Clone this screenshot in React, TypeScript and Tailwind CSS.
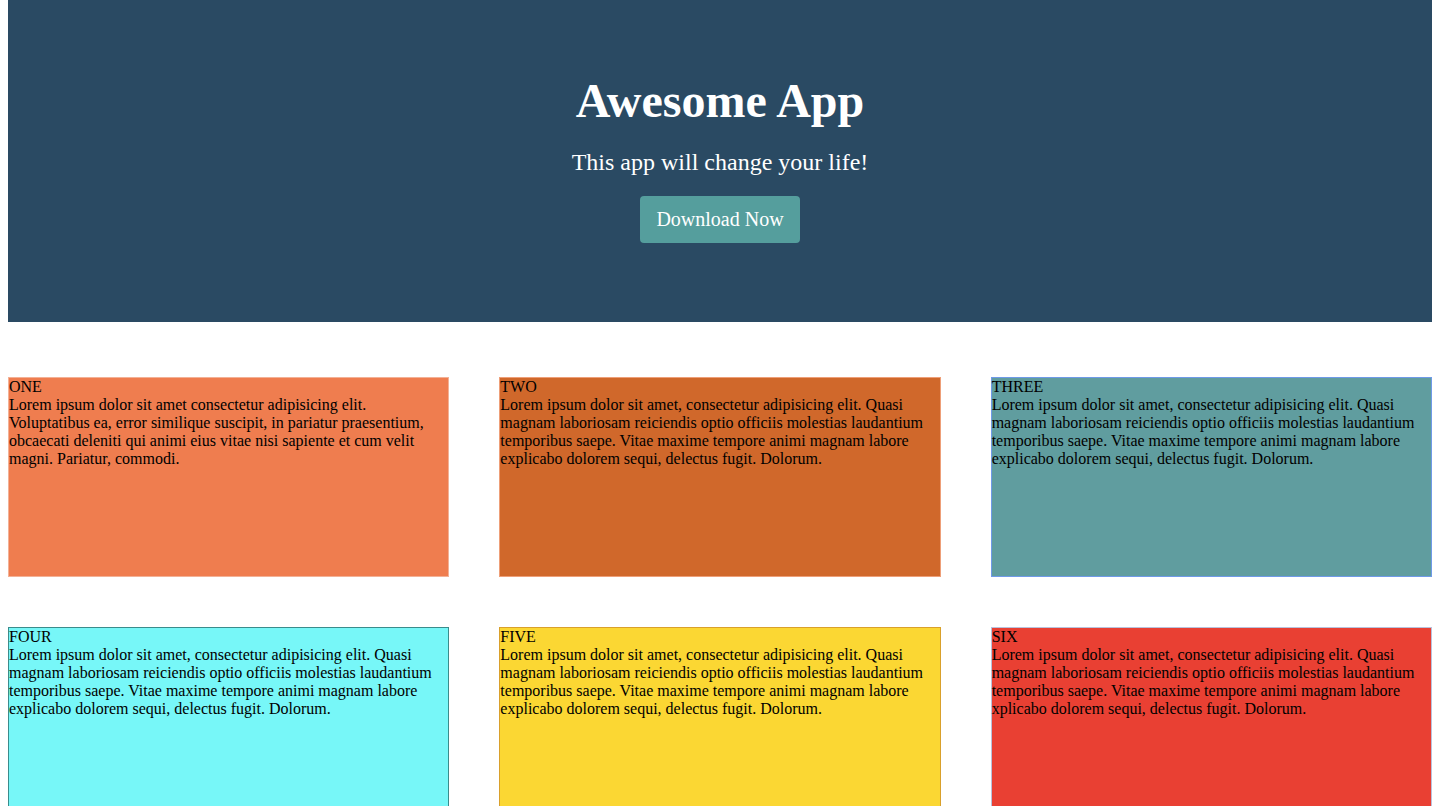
import React from 'react';

interface Card {
  title: string;
  text: string;
  className: string;
}

const longText =
  'Lorem ipsum dolor sit amet, consectetur adipisicing elit. Quasi magnam laboriosam reiciendis optio officiis molestias laudantium temporibus saepe. Vitae maxime tempore animi magnam labore explicabo dolorem sequi, delectus fugit. Dolorum.';

const cards: Card[] = [
  {
    title: 'ONE',
    text: 'Lorem ipsum dolor sit amet consectetur adipisicing elit. Voluptatibus ea, error similique suscipit, in pariatur praesentium, obcaecati deleniti qui animi eius vitae nisi sapiente et cum velit magni. Pariatur, commodi.',
    className: 'bg-[#ef7d4f] border-[#f3b196]',
  },
  { title: 'TWO', text: longText, className: 'bg-[#d0682b] border-[#ee9f78]' },
  { title: 'THREE', text: longText, className: 'bg-[#609d9f] border-[#6f9ae8]' },
  { title: 'FOUR', text: longText, className: 'bg-[#77f7f8] border-[#3a8c8c]' },
  { title: 'FIVE', text: longText, className: 'bg-[#fbd733] border-[#d9a02b]' },
  {
    title: 'SIX',
    text: 'Lorem ipsum dolor sit amet, consectetur adipisicing elit. Quasi magnam laboriosam reiciendis optio officiis molestias laudantium temporibus saepe. Vitae maxime tempore animi magnam labore xplicabo dolorem sequi, delectus fugit. Dolorum.',
    className: 'bg-[#e94033] border-[#b9c2dc]',
  },
];

const App: React.FC = () => {
  return (
    <div className="px-2 pb-8 bg-white text-black font-['Liberation_Serif','Times_New_Roman',serif]">
      <header className="h-[322px] bg-[#2a4a63] flex flex-col items-center pt-[73px] text-white">
        <h1 className="text-[48px] leading-[55px] font-bold">Awesome App</h1>
        <p className="mt-[20px] text-[24px] leading-[28px]">This app will change your life!</p>
        <button className="mt-[20px] bg-[#559e9d] rounded px-4 py-3 text-[20px] leading-[23px] text-white">
          Download Now
        </button>
      </header>

      <div className="mt-[55px] grid grid-cols-3 gap-x-[50px] gap-y-[50px]">
        {cards.map((card) => (
          <div key={card.title} className={`h-[200px] border text-[16px] leading-[18px] ${card.className}`}>
            <div>{card.title}</div>
            <p>{card.text}</p>
          </div>
        ))}
      </div>
    </div>
  );
};

export default App;
